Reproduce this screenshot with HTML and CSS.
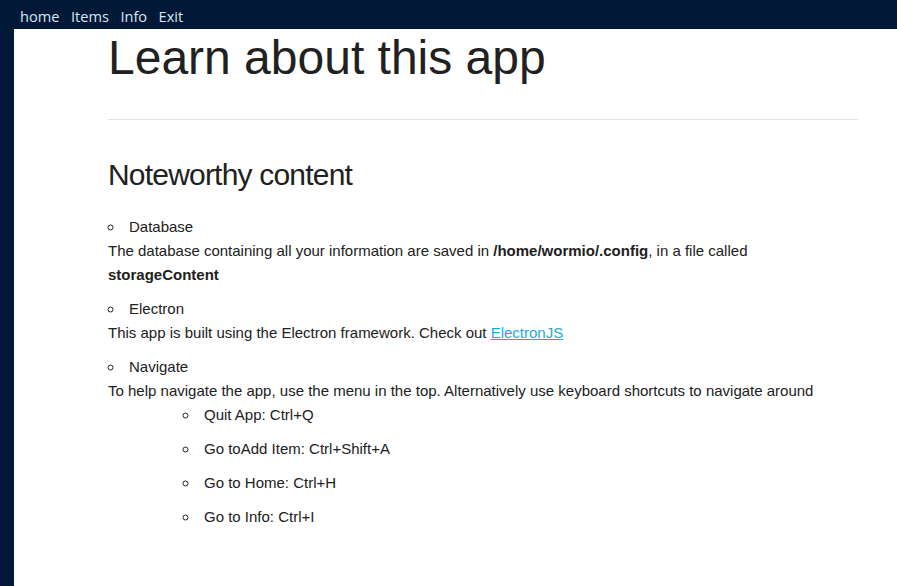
FILE: index.html
```html
<!DOCTYPE html>
<html>
<head>
<meta charset="utf-8">
<link rel="stylesheet" href="styles.css">
</head>
<body>
<nav class="topbar">
  <a class="nav-link">home</a>
  <a class="nav-link">Items</a>
  <a class="nav-link">Info</a>
  <a class="nav-link">Exit</a>
</nav>
<div class="frame">
  <main class="page">
    <h1 class="title">Learn about this app</h1>
    <hr class="rule">
    <h2 class="subtitle">Noteworthy content</h2>
    <ul class="topics">
      <li class="topic">Database</li>
    </ul>
    <p class="desc">The database containing all your information are saved in <b>/home/wormio/.config</b>, in a file called <b>storageContent</b></p>
    <ul class="topics">
      <li class="topic">Electron</li>
    </ul>
    <p class="desc">This app is built using the Electron framework. Check out <a class="link" href="#">ElectronJS</a></p>
    <ul class="topics">
      <li class="topic">Navigate</li>
    </ul>
    <p class="desc">To help navigate the app, use the menu in the top. Alternatively use keyboard shortcuts to navigate around</p>
    <ul class="shortcuts">
      <li class="shortcut">Quit App: Ctrl+Q</li>
      <li class="shortcut">Go toAdd Item: Ctrl+Shift+A</li>
      <li class="shortcut">Go to Home: Ctrl+H</li>
      <li class="shortcut">Go to Info: Ctrl+I</li>
    </ul>
  </main>
</div>
</body>
</html>
```
FILE: styles.css
```css
html, body {
  margin: 0;
  padding: 0;
  height: 100%;
  background: #011936;
  overflow: hidden;
}
body {
  display: flex;
  flex-direction: column;
  font-family: "Liberation Sans", Arial, sans-serif;
  color: #212121;
}
.topbar {
  height: 29px;
  display: flex;
  align-items: center;
  gap: 11.5px;
  padding: 0 0 0 20px;
  box-sizing: border-box;
  font-family: "Open Sans", sans-serif;
  font-size: 14.6px;
}
.nav-link {
  color: #d6e6f5;
  padding-top: 3px;
}
.frame {
  flex: 1;
  margin-left: 14px;
  background: #fff;
}
.page {
  width: 750px;
  margin-left: 94px;
  font-size: 15px;
  line-height: 24px;
}
.title {
  font-size: 48px;
  font-weight: 400;
  line-height: 58px;
  margin: 0;
  letter-spacing: 0;
}
.rule {
  border: 0;
  border-top: 1px solid #e2e2e2;
  margin: 32px 0 0 0;
  width: 750px;
}
.subtitle {
  font-size: 30px;
  font-weight: 400;
  letter-spacing: -0.8px;
  line-height: 36px;
  margin: 37px 0 0 0;
}
.topics {
  list-style: circle;
  margin: 22px 0 0 0;
  padding-left: 16px;
}
.topic {
  padding-left: 5px;
}
.desc + .topics {
  margin-top: 10px;
}
.desc {
  margin: 0;
}
.link {
  color: #1eaad9;
}
.shortcuts {
  list-style: circle;
  margin: 0;
  padding-left: 91px;
}
.shortcut {
  padding-left: 5px;
  margin-bottom: 10px;
}
```
